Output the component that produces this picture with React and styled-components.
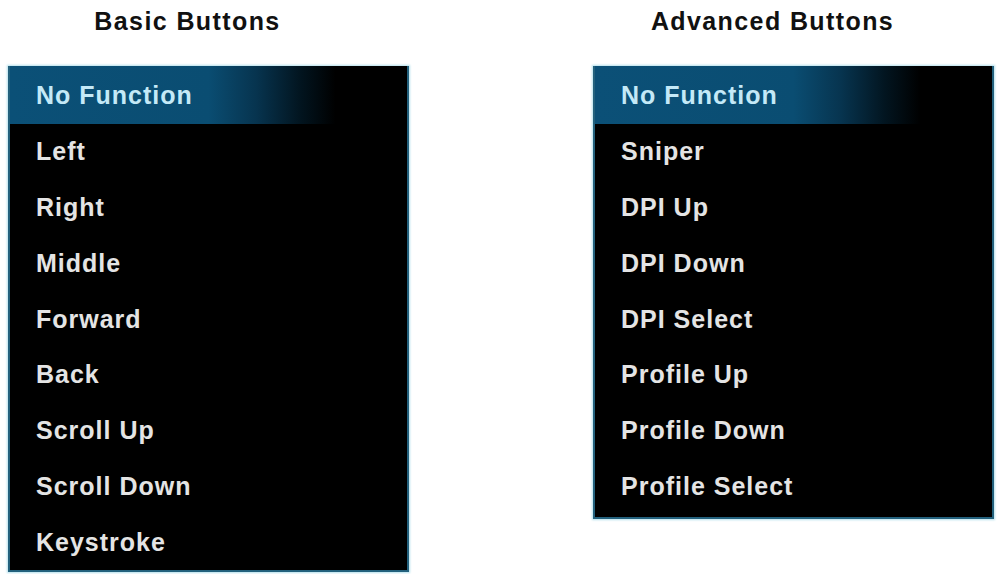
import React from "react";
import styled, { createGlobalStyle } from "styled-components";

const Global = createGlobalStyle`
  html, body { margin: 0; padding: 0; background: #ffffff; }
  body { font-family: "Liberation Sans", Arial, sans-serif; }
`;

const Page = styled.div`
  display: flex;
  gap: 184px;
  padding: 9px 0 0 8px;
  width: 998px;
  height: 574px;
  box-sizing: border-box;
  overflow: hidden;
`;

const Column = styled.section`
  display: flex;
  flex-direction: column;
  width: 401px;
`;

const Heading = styled.h2`
  margin: 0 42px 32px 0;
  font-size: 25px;
  line-height: 25px;
  font-weight: 700;
  letter-spacing: 1.4px;
  color: #111;
  text-align: center;
`;

const Panel = styled.ul`
  list-style: none;
  margin: 0;
  padding: 0 0 ${(p) => p.$extra || 0}px 0;
  background: #000;
  border: 2px solid #23617d;
  box-shadow: 0 0 2px 1px #b4e0ec;
  display: flex;
  flex-direction: column;
`;

const Item = styled.li`
  height: 55.8px;
  display: flex;
  align-items: center;
  padding-left: 26px;
  font-size: 25px;
  font-weight: 700;
  letter-spacing: 1px;
  color: ${(p) => (p.$active ? "#c4e9f7" : "#e4e4e4")};
  background: ${(p) =>
    p.$active
      ? "linear-gradient(to right, #0b5077 0%, #0a4d72 50%, #07344f 62%, #021520 73%, #000 82%)"
      : "transparent"};
  margin-top: ${(p) => (p.$active ? "-2px" : "0")};
  padding-top: ${(p) => (p.$active ? "2px" : "0")};
`;

const lists = [
  {
    title: "Basic Buttons",
    extra: 0,
    items: ["No Function", "Left", "Right", "Middle", "Forward", "Back", "Scroll Up", "Scroll Down", "Keystroke"],
  },
  {
    title: "Advanced Buttons",
    extra: 3,
    items: ["No Function", "Sniper", "DPI Up", "DPI Down", "DPI Select", "Profile Up", "Profile Down", "Profile Select"],
  },
];

export default function App() {
  return (
    <>
      <Global />
      <Page>
        {lists.map((l) => (
          <Column key={l.title}>
            <Heading>{l.title}</Heading>
            <Panel $extra={l.extra}>
              {l.items.map((it, i) => (
                <Item key={it} $active={i === 0}>
                  {it}
                </Item>
              ))}
            </Panel>
          </Column>
        ))}
      </Page>
    </>
  );
}
